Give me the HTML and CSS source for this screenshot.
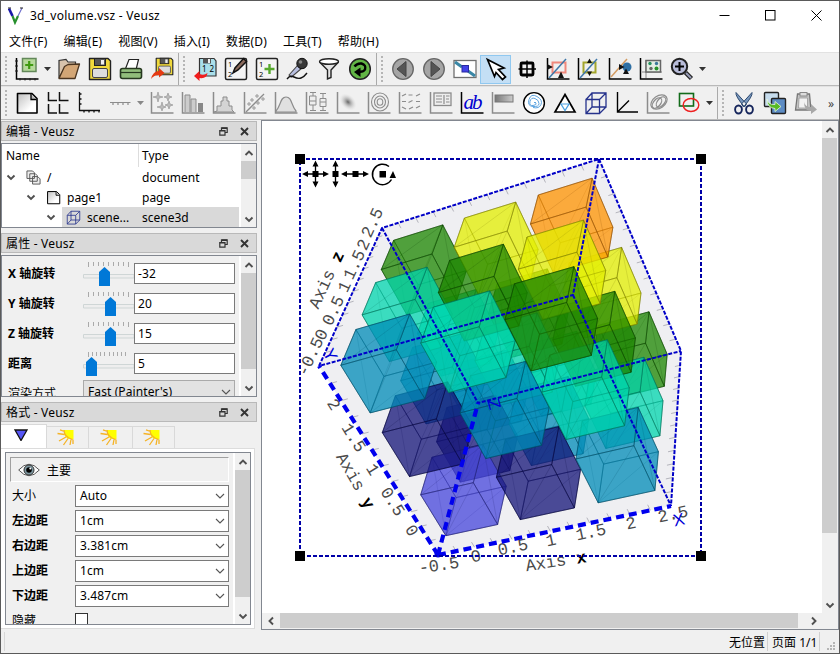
FILE: index.html
```html
<!DOCTYPE html>
<html lang="zh">
<head>
    <meta charset="UTF-8">
    <title>3d_volume.vsz - Veusz</title>
    <link rel="stylesheet" href="styles.css">
</head>
<body>
<svg class="defs" width="0" height="0">
    <symbol id="axes" viewBox="0 0 24 24"><path d="M1.5 1V22H23.500" fill="none" stroke="currentColor" stroke-width="1.500"/></symbol>
    <symbol id="float" viewBox="0 0 9 9"><path d="M2.500 3V.8H8.200V5.500H6.500M.8 3.500H6V8.200H.8z" fill="none" stroke="#333" stroke-width="1.2"/><path d="M.8 3.800H6M3 1.200h5" stroke="#333" stroke-width="1.400"/></symbol>
    <symbol id="close" viewBox="0 0 9 9"><path d="M1 1L8 8M8 1L1 8" stroke="#333" stroke-width="1.900"/></symbol>
    <symbol id="up" viewBox="0 0 10 10"><path d="M1.500 7L5 3.500 8.500 7" fill="none" stroke="#505050" stroke-width="1.900"/></symbol>
    <symbol id="down" viewBox="0 0 10 10"><path d="M1.500 3.500L5 7 8.500 3.500" fill="none" stroke="#505050" stroke-width="1.900"/></symbol>
    <symbol id="combo" viewBox="0 0 10 10"><path d="M1 3L5 7 9 3" fill="none" stroke="#555" stroke-width="1.100"/></symbol>
    <symbol id="cube" viewBox="0 0 24 24"><path d="M2 8.500H15.500V22.500H2zM8 2H22V16H8zM2 8.500L8 2M15.500 8.500L22 2M15.500 22.500L22 16M2 22.500L8 16" fill="none" stroke="#26328c" stroke-width="1.300"/></symbol>
    <symbol id="sheet" viewBox="0 0 24 24"><path d="M2.500 2.500H17L22 7.500V22H2.500z" fill="url(#paper)" stroke="#000" stroke-width="1.600" stroke-linejoin="round"/><path d="M16 3V8.500H21.500" fill="#bbb" stroke="#000" stroke-width="1.300"/></symbol>
    <symbol id="floppy" viewBox="0 0 24 24"><path d="M1.500 1.500H20L22.500 4V22.500H1.500z" fill="#f0d93c" stroke="#222" stroke-width="1.400" stroke-linejoin="round"/><rect x="6.500" y="1.500" width="11" height="7" fill="#555" stroke="#222"/><rect x="13" y="3" width="3" height="4.500" fill="#eee"/><rect x="4.500" y="11.500" width="15" height="9" rx="1.500" fill="#ddd" stroke="#444"/></symbol>
    <symbol id="sun" viewBox="0 0 17 17"><path d="M7 1H16.500V10H12A7 7 0 0 1 7 4z" fill="#ff0"/><path d="M7 1Q7 8 15.500 10.500M7.500 2.500L3 .8M7.500 5.500L.5 4.500M9 8L2 12M11 9.500L6.500 16M14 10.500L13 16M16 10.500V15" fill="none" stroke="#f5b326" stroke-width="1.300"/></symbol>
    <linearGradient id="paper" x1="0" y1="0" x2="1" y2="1"><stop offset=".1" stop-color="#c8c8c8"/><stop offset=".7" stop-color="#fff"/></linearGradient>
</svg>

<div class="window">
    <div class="titlebar">
        <svg class="logo" viewBox="0 0 16 18"><path d="M1 1.500L4.500 9" stroke="#1717a8" stroke-width="2.600"/><path d="M4.500 9L7 15.500 10 9" fill="none" stroke="#27902d" stroke-width="2.200"/><path d="M10 9L14 1" stroke="#6a6acb" stroke-width="1.100"/><path d="M0 1h3M12 1h3" stroke="#222" stroke-width="1"/></svg>
        <span class="title">3d_volume.vsz - Veusz</span>
        <svg class="win-btn" viewBox="0 0 11 11"><path d="M.5 5.500H10.500" stroke="#000"/></svg>
        <svg class="win-btn" viewBox="0 0 11 11"><rect x=".5" y=".5" width="9.500" height="9.500" fill="none" stroke="#000"/></svg>
        <svg class="win-btn" viewBox="0 0 11 11"><path d="M.5 .5L10.500 10.500M10.500 .5L.5 10.500" stroke="#000"/></svg>
    </div>
    <div class="menubar">
        <span>文件(F)</span><span>编辑(E)</span><span>视图(V)</span><span>插入(I)</span><span>数据(D)</span><span>工具(T)</span><span>帮助(H)</span>
    </div>

    <div class="toolbar">
        <div class="group">
            <i class="grip"></i>
            <b class="tool"><svg viewBox="0 0 24 24"><use href="#axes"/><path d="M0 4h3M0 9h3M0 14h3M5 21v2.500M10 21v2.500M15 21v2.500M20 21v2.500" stroke="#222"/><rect x="7.500" y="1.500" width="13.500" height="13" fill="#b5d99a" stroke="#63885a" stroke-width="1.500"/><path d="M14.200 4v8M10.200 8h8" stroke="#3f9a10" stroke-width="2.200"/></svg></b>
            <b class="drop"></b>
            <b class="tool"><svg viewBox="0 0 24 24"><path d="M2 21V3.500L9 2.500 11 5H18.500V9L8 10z" fill="#d8c3ac" stroke="#333" stroke-width="1.200"/><path d="M2 21.500L7.500 9.500 11 7.500 22.500 7 18 21.500z" fill="#d3a676" stroke="#4b3520" stroke-width="1.300" stroke-linejoin="round"/></svg></b>
            <b class="tool"><svg viewBox="0 0 24 24"><use href="#floppy"/></svg></b>
            <b class="tool"><svg viewBox="0 0 24 24"><path d="M6 13L10 2.500H19.500L17 13z" fill="#fff" stroke="#222" stroke-width="1.200"/><rect x="1.500" y="11.500" width="21" height="10" rx="2" fill="#91bd7b" stroke="#26381f" stroke-width="1.600"/><path d="M2 15.500H22" stroke="#26381f" stroke-width="1.200"/></svg></b>
            <b class="tool"><svg viewBox="0 0 24 24"><use href="#floppy" x="5" y="0" width="19" height="19"/><path d="M1 22Q3 14 9 14V11L14.500 16 9 20.500V18Q4 18 1 22z" fill="#e63a12"/></svg></b>
        </div>
        <div class="group group-b">
            <i class="grip"></i>
            <b class="tool"><svg viewBox="0 0 24 24"><path d="M6.500 1.500H21L23 4V19H6.500z" fill="#a9dfea" stroke="#333" stroke-width="1.200"/><rect x="10" y="1.500" width="8" height="5" fill="#555"/><rect x="15" y="2" width="2" height="4" fill="#eee"/><text x="9" y="15" font-size="8" textLength="12">12</text><path d="M1 19L6.500 14V17Q11 19 14.500 16Q14 22 6.500 21V24z" fill="#f01d1d"/></svg></b>
            <b class="tool"><svg viewBox="0 0 24 24"><rect x="1.500" y="1.500" width="21" height="21" rx="1.500" fill="#f4f4f4" stroke="#222" stroke-width="1.500"/><text x="4" y="10" font-size="7.500">1</text><text x="4" y="20" font-size="7.500">2</text><path d="M9 16L11 11 19.500 1.500 22.500 4.500 14 13z" fill="#8a6a5c" stroke="#111" stroke-width="1.500"/></svg></b>
            <b class="tool"><svg viewBox="0 0 24 24"><rect x="1.500" y="1.500" width="21" height="21" rx="1.500" fill="#f4f4f4" stroke="#222" stroke-width="1.500"/><text x="4" y="10" font-size="7.500">1</text><text x="4" y="20" font-size="7.500">2</text><path d="M14.500 7v10M9.500 12h10" stroke="#55a82c" stroke-width="2.400"/></svg></b>
            <b class="tool"><svg viewBox="0 0 24 24"><path d="M3 18L12 8 15.500 11.500 5.500 20z" fill="#b8bfe0" stroke="#444" stroke-width="1.100"/><circle cx="16" cy="6.500" r="5.200" fill="#393939" stroke="#111"/><circle cx="14.500" cy="5" r="1.800" fill="#888"/><path d="M1 22Q4 18 8 20T15 21T21 16" fill="none" stroke="#111" stroke-width="1.400"/></svg></b>
            <b class="tool"><svg viewBox="0 0 24 24"><path d="M2.500 5L10.500 13V22L14 20.500V13L21.500 5" fill="#e4e4e4" stroke="#222" stroke-width="1.400"/><ellipse cx="12" cy="4.500" rx="9.500" ry="2.800" fill="#fff" stroke="#222" stroke-width="1.400"/></svg></b>
            <b class="tool"><svg viewBox="0 0 24 24"><circle cx="12" cy="12" r="10.300" fill="#62b545" stroke="#222" stroke-width="1.500"/><path d="M6.500 9.500Q9 6 13.500 6.500Q18.500 8 17 12.500Q15.500 15 11.500 14.800" fill="none" stroke="#000" stroke-width="2.400"/><path d="M6 15L12.500 10.500V20z" fill="#000"/></svg></b>
        </div>
        <div class="group last">
            <i class="grip"></i>
            <b class="tool"><svg viewBox="0 0 24 24"><circle cx="12" cy="12" r="10.300" fill="#a5a5a5" stroke="#666" stroke-width="1.300"/><path d="M15 4.500V19.500L6 12z" fill="#555" stroke="#444"/></svg></b>
            <b class="tool"><svg viewBox="0 0 24 24"><circle cx="12" cy="12" r="10.300" fill="#a5a5a5" stroke="#666" stroke-width="1.300"/><path d="M9 4.500V19.500L18 12z" fill="#555" stroke="#444"/></svg></b>
            <b class="tool"><svg viewBox="0 0 24 24"><rect x="1" y="3.500" width="22" height="17" fill="#fff" stroke="#707070" stroke-width="1.300"/><path d="M2 5L9 10M15 14L22 19" stroke="#3a87a6" stroke-width="3"/><rect x="9" y="8.500" width="6.500" height="6.500" fill="#4343e8" stroke="#2929a0"/></svg></b>
            <b class="tool active"><svg viewBox="0 0 24 24"><path d="M3.500 2.500L20 11 14.500 12.500 21.500 20 18.500 22.500 12 15.500 10.500 19.500z" fill="#fff" stroke="#000" stroke-width="1.700"/></svg></b>
            <b class="tool"><svg viewBox="0 0 24 24"><rect x="6" y="6" width="12" height="12" rx="1" fill="none" stroke="#000" stroke-width="2.800"/><path d="M12 3.500V21M3.500 12H21" stroke="#000" stroke-width="1.500"/></svg></b>
            <b class="tool"><svg viewBox="0 0 24 24"><use href="#axes"/><rect x="6.500" y="5.500" width="13" height="10" fill="none" stroke="#f0887c" stroke-width="2"/><path d="M3 21L20 2" stroke="#3f76a8" stroke-width="1.500"/><path d="M1 7L7 10 1 13zM12 21L15 14.500 18 21z" fill="#111"/></svg></b>
            <b class="tool"><svg viewBox="0 0 24 24"><use href="#axes"/><rect x="6.500" y="5.500" width="12" height="10" fill="none" stroke="#a4a62c" stroke-width="2"/><path d="M3 21L20 2" stroke="#3f76a8" stroke-width="1.500"/><path d="M10 6L12.500 1.500 15 6zM10 14.500L12.500 19 15 14.500z" fill="#111"/></svg></b>
            <b class="tool"><svg viewBox="0 0 24 24"><use href="#axes"/><path d="M3 20L19 2" stroke="#d39b61" stroke-width="1.500"/><circle cx="19" cy="10" r="4.500" fill="#2e6fa4"/><path d="M11 7L16.500 10 11 13zM15 17L18 11.500 21 17z" fill="#111"/></svg></b>
            <b class="tool"><svg viewBox="0 0 24 24"><use href="#axes"/><path d="M7 3V21M3 15H23" stroke="#888"/><rect x="7" y="3.500" width="14.500" height="11.500" fill="#e4eee4" stroke="#666" stroke-width="1.500"/><circle cx="11" cy="6.500" r="1.700" fill="#26915f"/><circle cx="17.500" cy="6.500" r="1.700" fill="#3b789a"/><circle cx="12" cy="11.500" r="1.700" fill="#666"/><circle cx="17.500" cy="11.500" r="2" fill="#27912a"/></svg></b>
            <b class="tool"><svg viewBox="0 0 24 24"><path d="M15.500 15.500L21.500 21.500" stroke="#222" stroke-width="4.500"/><path d="M16 16L21 21" stroke="#999db8" stroke-width="2"/><circle cx="9.500" cy="9.500" r="7.700" fill="#b8bcd9" stroke="#222" stroke-width="2"/><path d="M9.500 5V14M5 9.500H14" stroke="#000" stroke-width="2"/></svg></b>
            <b class="drop"></b>
        </div>
    </div>

    <div class="toolbar">
        <div class="group long">
            <i class="grip"></i>
            <b class="tool"><svg viewBox="0 0 24 24"><use href="#sheet"/></svg></b>
            <b class="tool"><svg viewBox="0 0 24 24"><path d="M2.500 1V9.500H11M13.500 1V9.500H22.500M2.500 13V22H11M13.500 13V22H22.500" fill="none" stroke="#111" stroke-width="1.500"/></svg></b>
            <b class="tool"><svg viewBox="0 0 24 24"><path d="M2.500 1V19.500H23M2 3h2.500M2 8h2.500M2 13h2.500M7 20v1.500M12 20v1.500M17 20v1.500M22 20v1.500" fill="none" stroke="#111" stroke-width="1.300"/></svg></b>
            <b class="tool off"><svg viewBox="0 0 24 24"><path d="M2 11.500H22.500M5 12v2M10 12v2M15 12v2M20 12v2" stroke="currentColor" stroke-width="1.200"/></svg></b>
            <b class="drop grey"></b>
            <b class="tool off"><svg viewBox="0 0 24 24"><use href="#axes"/><path d="M8 1L9 5 13 6 9 7 8 11 7 7 3 6 7 5zM18 2L19 5 22 6 19 7 18 10 17 7 14 6 17 5zM12 11L13 15 16 16 13 17 12 20 11 17 7 16 11 15zM19 10L20 13 23 14 20 15 19 18 18 15 15 14 18 13z" fill="#bbb" stroke="#999" stroke-width=".7"/></svg></b>
            <b class="tool off"><svg viewBox="0 0 24 24"><use href="#axes"/><path d="M4 21V4H9V21M10 21V8H15V21" fill="#ccc" stroke="currentColor"/><rect x="17" y="12" width="5" height="9" fill="#888"/></svg></b>
            <b class="tool off"><svg viewBox="0 0 24 24"><use href="#axes"/><path d="M2 21L5 20V15H9V10H11V6H15V10H17V15H20V19L22 21z" fill="#d4d4d4" stroke="currentColor"/></svg></b>
            <b class="tool off"><svg viewBox="0 0 24 24"><use href="#axes"/><path d="M3 21L21 3" stroke="currentColor" stroke-width="1.300"/><g fill="#ddd" stroke="#999"><circle cx="6" cy="13" r="1.200"/><circle cx="9" cy="9" r="1.200"/><circle cx="14" cy="5" r="1.200"/><circle cx="20" cy="8" r="1.200"/><circle cx="15" cy="12" r="1.200"/><circle cx="11" cy="17" r="1.200"/></g></svg></b>
            <b class="tool off"><svg viewBox="0 0 24 24"><use href="#axes"/><path d="M2 20C7 15 6 6 12 6S17 14 22 20V21H2z" fill="#e0e0e0" stroke="currentColor" stroke-width="1.200"/></svg></b>
            <b class="tool off"><svg viewBox="0 0 24 24"><use href="#axes"/><path d="M8 1V20M5 1.500H11M5 19.500H11M18 2V20M15 2.500H21M15 19.500H21" stroke="currentColor"/><path d="M4.500 5H11V14H4.500zM4.500 10H11M15 7.500H21V15.500H15zM15 11H21" fill="#eee" stroke="currentColor"/></svg></b>
            <b class="tool off"><svg viewBox="0 0 24 24"><radialGradient id="blur"><stop offset="0" stop-color="#666"/><stop offset="1" stop-color="#ddd" stop-opacity="0"/></radialGradient><use href="#axes"/><ellipse cx="12" cy="11" rx="10" ry="7" transform="rotate(45 12 11)" fill="url(#blur)"/></svg></b>
            <b class="tool off"><svg viewBox="0 0 24 24"><use href="#axes"/><g fill="none" stroke="currentColor" stroke-width="1.100"><ellipse cx="13" cy="11" rx="8.500" ry="9"/><ellipse cx="13" cy="11" rx="5.500" ry="6"/><ellipse cx="13" cy="11" rx="2.800" ry="3.300"/></g></svg></b>
            <b class="tool off"><svg viewBox="0 0 24 24"><use href="#axes"/><path d="M4 5L8 3M10.500 4H14.500M18 5L22 3M4 10.500H8M10.500 11.500L14.500 9.500M18 10.500H22M4 16L8 18M11 18L15 16M18 17L22 15" stroke="currentColor" stroke-width="1.200"/></svg></b>
            <b class="tool off"><svg viewBox="0 0 24 24"><use href="#axes"/><rect x="5" y="2" width="17" height="12.500" fill="#eee" stroke="currentColor" stroke-width="1.300"/><path d="M7 5H13M7 8H13M7 11H13M15 4V13M17 5H20.500M17 8H20M17 11H20.500" stroke="currentColor" stroke-width="1.200"/></svg></b>
            <b class="tool"><svg class="word" viewBox="0 0 24 24"><use href="#axes"/><text class="ab" x="3.500" y="18" textLength="19">ab</text></svg></b>
            <b class="tool off"><svg viewBox="0 0 24 24"><linearGradient id="bar"><stop offset="0" stop-color="#777"/><stop offset="1" stop-color="#ccc"/></linearGradient><use href="#axes"/><rect x="4" y="4" width="18" height="7" fill="url(#bar)" stroke="#777"/></svg></b>
            <b class="tool"><svg viewBox="0 0 24 24"><circle cx="12" cy="12" r="10.400" fill="#fff" stroke="#000" stroke-width="1.400"/><path d="M12 12q1-2 2 0t-3 2.500-3-4 5-3 4 5-6 3-4-7 8-3 4 8-8 3" fill="none" stroke="#5fa5e0" stroke-width="1"/></svg></b>
            <b class="tool"><svg viewBox="0 0 24 24"><path d="M12 3.500L22 21H2z" fill="#fff" stroke="#000" stroke-width="1.700"/><path d="M8 13H16L12 19.500z" fill="none" stroke="#4ba0e0" stroke-width="1.200"/></svg></b>
            <b class="tool"><svg viewBox="0 0 24 24"><use href="#cube"/></svg></b>
            <b class="tool"><svg viewBox="0 0 24 24"><path d="M2.500 1V21H23M2.500 21L14 9.500" fill="none" stroke="#000" stroke-width="1.400"/></svg></b>
            <b class="tool off"><svg viewBox="0 0 24 24"><use href="#axes"/><g fill="none" stroke="currentColor" stroke-width="1.200"><ellipse cx="13" cy="11" rx="9" ry="6" transform="rotate(-35 13 11)"/><ellipse cx="11" cy="12" rx="6" ry="3.500" transform="rotate(-50 11 12)"/><ellipse cx="15" cy="11" rx="6" ry="3.500" transform="rotate(-50 15 11)"/></g></svg></b>
            <b class="tool"><svg viewBox="0 0 24 24"><rect x="2.500" y="2.500" width="14" height="12.500" fill="none" stroke="#126b1a" stroke-width="1.600"/><ellipse cx="14" cy="14" rx="7.800" ry="6.500" fill="none" stroke="#ee2020" stroke-width="1.400"/></svg></b>
            <b class="drop"></b>
        </div>
        <div class="group last">
            <i class="grip"></i>
            <b class="tool"><svg viewBox="0 0 24 24"><path d="M4 1.500Q3 5 12.500 16L14.500 13zM20 1.500Q21 5 11.500 16L9.500 13z" fill="#7897bd" stroke="#2e4a70" stroke-width="1"/><ellipse cx="6.500" cy="18.500" rx="3.400" ry="4" fill="none" stroke="#16265c" stroke-width="1.900"/><ellipse cx="17.500" cy="18.500" rx="3.400" ry="4" fill="none" stroke="#16265c" stroke-width="1.900"/></svg></b>
            <b class="tool"><svg viewBox="0 0 24 24"><rect x="1.500" y="1.500" width="14" height="14" rx="1" fill="#c6dced" stroke="#222" stroke-width="1.400"/><rect x="8.500" y="7.500" width="14" height="15" rx="1" fill="#5d8cc4" stroke="#222" stroke-width="1.400"/><path d="M4 8Q5 14 12 13.500V10.500L18 15.500 12 20.500V17.500Q4 17 4 8z" fill="#57ba25" stroke="#e8f6df" stroke-width=".8"/></svg></b>
            <b class="tool"><svg viewBox="0 0 24 24"><path d="M3.500 3H15.500L17 19H1.500z" fill="#c4c4c4" stroke="#777" stroke-width="1.300"/><rect x="6" y="1.500" width="7" height="3.500" fill="#ddd" stroke="#888"/><path d="M5 7H13.500V17H4.500z" fill="#f2f2f2" stroke="#999" stroke-width=".8"/><path d="M10 11Q11 16 17 16V13L23 18.500 17 23V20Q10 20 10 11z" fill="#a8a8a8"/></svg></b>
            <span class="more">»</span>
        </div>
    </div>

    <div class="main">
        <div class="docks">
            <div class="dock-title"><span>编辑 - Veusz</span><svg class="ctl"><use href="#float"/></svg><svg class="ctl"><use href="#close"/></svg></div>
            <div class="panel tree">
                <div class="tree-body">
                    <div class="tree-row head"><span class="name">Name</span><span class="type">Type</span></div>
                    <div class="tree-row"><span class="name"><svg class="exp"><use href="#down"/></svg><svg class="node" viewBox="0 0 16 16"><path d="M1 1H7L9 3V9H1zM4 4H10L12 6V12H4zM7 7H12.500L15 9.500V15H7z" fill="#eee" stroke="#555"/></svg>/</span><span class="type">document</span></div>
                    <div class="tree-row l1"><span class="name"><svg class="exp"><use href="#down"/></svg><svg class="node"><use href="#sheet"/></svg>page1</span><span class="type">page</span></div>
                    <div class="tree-row l2"><span class="name"><svg class="exp"><use href="#down"/></svg><em class="picked"><svg class="node"><use href="#cube"/></svg>scene...</em></span><span class="type picked">scene3d</span></div>
                </div>
                <div class="vscroll"><svg><use href="#up"/></svg><i class="thumb t1"></i><svg><use href="#down"/></svg></div>
            </div>

            <div class="dock-title"><span>属性 - Veusz</span><svg class="ctl"><use href="#float"/></svg><svg class="ctl"><use href="#close"/></svg></div>
            <div class="panel props">
                <div class="prop-body">
                    <div class="prop"><label>X 轴旋转</label><svg class="slider" viewBox="0 0 51 30"><path class="track" d="M.5 12.500H51V16H.5z"/><path class="ticks" d="M5.500 0v5M10.500 0v4M15.500 0v4M20.500 0v4M25.500 0v4M30.500 0v4M35.500 0v4M40.500 0v4M45.500 0v5"/><path class="knob" d="M16 24V10L21.500 5 27 10V24z"/></svg><div class="field">-32</div></div>
                    <div class="prop"><label>Y 轴旋转</label><svg class="slider" viewBox="0 0 51 30"><path class="track" d="M.5 12.500H51V16H.5z"/><path class="ticks" d="M5.500 0v5M10.500 0v4M15.500 0v4M20.500 0v4M25.500 0v4M30.500 0v4M35.500 0v4M40.500 0v4M45.500 0v5"/><path class="knob" d="M22 24V10L27.500 5 33 10V24z"/></svg><div class="field">20</div></div>
                    <div class="prop"><label>Z 轴旋转</label><svg class="slider" viewBox="0 0 51 30"><path class="track" d="M.5 12.500H51V16H.5z"/><path class="ticks" d="M5.500 0v5M10.500 0v4M15.500 0v4M20.500 0v4M25.500 0v4M30.500 0v4M35.500 0v4M40.500 0v4M45.500 0v5"/><path class="knob" d="M22 24V10L27.500 5 33 10V24z"/></svg><div class="field">15</div></div>
                    <div class="prop"><label>距离</label><svg class="slider" viewBox="0 0 51 30"><path class="track" d="M.5 12.500H51V16H.5z"/><path class="ticks" d="M5.500 0v5M9.500 0v4M13.500 0v4M17.500 0v4M21.500 0v4M26.500 0v4M30.500 0v4M34.500 0v4M38.500 0v4M42.500 0v4"/><path class="knob" d="M3 24V10L8.500 5 14 10V24z"/></svg><div class="field">5</div></div>
                    <div class="prop plain"><label>渲染方式</label><div class="field select">Fast (Painter's)<svg><use href="#combo"/></svg></div></div>
                </div>
                <div class="vscroll"><svg><use href="#up"/></svg><i class="thumb t2"></i><svg><use href="#down"/></svg></div>
            </div>

            <div class="dock-title"><span>格式 - Veusz</span><svg class="ctl"><use href="#float"/></svg><svg class="ctl"><use href="#close"/></svg></div>
            <div class="tabs">
                <div class="tab on"><svg class="tri" viewBox="0 0 14 12"><path d="M1 1H13L7 11.500z" fill="#5656f5" stroke="#111" stroke-width="1.300"/></svg></div>
                <div class="tab"><svg><use href="#sun"/></svg></div>
                <div class="tab wide"><svg><use href="#sun"/></svg></div>
                <div class="tab"><svg><use href="#sun"/></svg></div>
            </div>
            <div class="pane">
                <div class="panel format">
                    <div class="format-body">
                        <div class="section"><svg viewBox="0 0 22 14"><path d="M.7 7Q11-4.500 21.300 7Q11 18.500.7 7z" fill="#fff" stroke="#555"/><circle cx="11" cy="7" r="5" fill="#7d97a0" stroke="#333"/><circle cx="11" cy="7" r="2.800"/><circle cx="12.300" cy="5.500" r="1" fill="#fff"/></svg>主要</div>
                        <div class="opt plain"><label>大小</label><div class="field">Auto<svg><use href="#combo"/></svg></div></div>
                        <div class="opt"><label>左边距</label><div class="field">1cm<svg><use href="#combo"/></svg></div></div>
                        <div class="opt"><label>右边距</label><div class="field">3.381cm<svg><use href="#combo"/></svg></div></div>
                        <div class="opt"><label>上边距</label><div class="field">1cm<svg><use href="#combo"/></svg></div></div>
                        <div class="opt"><label>下边距</label><div class="field">3.487cm<svg><use href="#combo"/></svg></div></div>
                        <div class="opt plain"><label>隐藏</label><i class="check"></i></div>
                    </div>
                    <div class="vscroll"><svg><use href="#up"/></svg><i class="thumb t3"></i><svg><use href="#down"/></svg></div>
                </div>
            </div>
        </div>

        <div class="canvas">
            <div class="canvas-row">
                <svg class="plot" viewBox="262 121 560 492">
                    <g id="volume"></g>
                    <g class="labels">
                        <g class="ax-x">
                            <text transform="translate(439 566) rotate(-8)">-0.5</text><text transform="translate(476 557) rotate(-12)">0</text>
                            <text transform="translate(513 548) rotate(-12)">0.5</text><text transform="translate(551 541) rotate(-12)">1</text>
                            <text transform="translate(591 533) rotate(-12)">1.5</text><text transform="translate(631 524) rotate(-12)">2</text>
                            <text transform="translate(673 515) rotate(-12)">2.5</text>
                            <text transform="translate(556 562) rotate(-9)">Axis <tspan class="bold">x</tspan></text>
                        </g>
                        <g class="ax-y">
                            <text transform="translate(411 531) rotate(58)">0</text><text transform="translate(392 502) rotate(58)">0.5</text>
                            <text transform="translate(372 470) rotate(58)">1</text><text transform="translate(353 438) rotate(58)">1.5</text>
                            <text transform="translate(333 405) rotate(58)">2</text>
                            <text transform="translate(355 481) rotate(60)">Axis <tspan class="bold">y</tspan></text>
                        </g>
                        <g class="ax-z">
                            <text transform="translate(311 357) rotate(-65)">-0.5</text><text transform="translate(322 335) rotate(-65)">0</text>
                            <text transform="translate(334 311) rotate(-65)">0.5</text><text transform="translate(345 287) rotate(-65)">1</text>
                            <text transform="translate(355 265) rotate(-65)">1.5</text><text transform="translate(364 245) rotate(-65)">2</text>
                            <text transform="translate(373 223) rotate(-65)">2.5</text>
                            <text transform="translate(327 280) rotate(-65)">Axis <tspan class="bold">z</tspan></text>
                        </g>
                    </g>
                    <path class="edge" d="M319 366L382 228L599 159L681 351L671 506M382 228L478 403L681 351M599 159L573 295L319 366M573 295L671 506"/>
                    <path class="edge thick" d="M438 555L671 506M438 555L319 366M438 555L478 403"/>
                    <circle cx="438" cy="554" r="3.500" fill="#00e"/>
                    <g class="corner">
                        <text transform="translate(679 520) rotate(-12)">X</text>
                        <text transform="translate(330 355) rotate(62)">Y</text>
                        <text transform="translate(494 404) rotate(75)">Z</text>
                    </g>
                    <rect class="selection" x="300" y="159" width="401" height="397"/>
                    <path d="M295 154h10v10h-10zM696 154h10v10h-10zM295 551h10v10h-10zM696 551h10v10h-10z"/>
                    <g class="move">
                        <path d="M305 174H326M315.500 163V185M335.500 163V185M344 174H367" stroke="#000" stroke-width="1.300"/>
                        <path d="M312.500 171h6v6h-6zM332.500 171h6v6h-6zM352.500 171h6v6h-6zM379.500 171h6.500v6.500h-6.500z"/>
                        <path d="M302 174l6-3v6zM329 174l-6-3v6zM315.500 160.500l-3 6h6zM315.500 187.500l-3-6h6zM335.500 160.500l-3 6h6zM335.500 187.500l-3-6h6zM341 174l6-3v6zM369 174l-6-3v6zM393 171l-3.500 7h6.500z"/>
                        <path d="M391.500 179.500A10.200 10.200 0 1 1 389 166.500" fill="none" stroke="#000" stroke-width="1.500"/>
                    </g>
                </svg>
                <div class="vscroll"><svg><use href="#up"/></svg><i class="thumb t4"></i><svg><use href="#down"/></svg></div>
            </div>
            <div class="hscroll"><svg class="left"><use href="#up"/></svg><i></i><svg class="right"><use href="#up"/></svg></div>
        </div>
    </div>

    <div class="status"><span class="first"></span><span class="cell">无位置</span><span class="cell">页面 1/1</span><svg viewBox="0 0 9 9"><path d="M6 0h2v2H6zM3 3h2v2H3zM6 3h2v2H6zM0 6h2v2H0zM3 6h2v2H3zM6 6h2v2H6z" fill="#b5b5b5"/></svg></div>
</div>
<script src="plot.js"></script>
</body>
</html>
```
FILE: styles.css
```css
* {
    box-sizing: border-box;
}
body {
    margin: 0;
    font-family: "Noto Sans", "Noto Sans CJK SC", sans-serif;
    font-size: 12px;
    color: #000;
}
svg {
    display: block;
    flex: none;
}
.defs {
    position: absolute;
}
.window {
    display: flex;
    flex-direction: column;
    width: 840px;
    height: 654px;
    border: 1px solid #5a5a5a;
    background: #f0f0f0;
    overflow: hidden;
}
.titlebar {
    display: flex;
    align-items: center;
    height: 29px;
    background: #fff;
    padding-right: 17px;
}
.logo {
    width: 16px;
    height: 18px;
    margin-left: 7px;
}
.title {
    flex: 1;
    margin-left: 6px;
    letter-spacing: .25px;
}
.win-btn {
    width: 11px;
    height: 11px;
    margin-left: 35px;
}
.win-btn:nth-of-type(2) {
    margin-left: 0;
}
.menubar {
    display: flex;
    height: 22px;
    line-height: 24px;
    background: #fff;
    padding-left: 8px;
}
.menubar span {
    margin-right: 16px;
    letter-spacing: .2px;
}

/* toolbars */
.toolbar {
    display: flex;
    height: 34px;
    border-top: 1px solid #e2e2e2;
    border-bottom: 1px solid #b9b9b9;
}
.group {
    display: flex;
    align-items: center;
    width: 178px;
    border-right: 1px solid #aaa;
}
.group-b {
    width: 198px;
}
.group.long {
    width: 717px;
}
.group.last {
    flex: 1;
    border: 0;
}
.grip {
    width: 2px;
    height: 26px;
    margin: 0 4px;
    background: repeating-linear-gradient(#b5b5b5 0 2px, #f0f0f0 2px 4px);
}
.tool {
    display: flex;
    flex: none;
    align-items: center;
    justify-content: center;
    width: 31px;
    height: 29px;
    font-weight: normal;
}
.tool svg {
    width: 24px;
    height: 24px;
}
.tool .word {
    overflow: visible;
}
.tool.off {
    color: #8c8c8c;
}
.tool.active {
    background: #c4dff5;
    border: 1px solid #90c8f0;
}
.ab {
    font: italic 21px "Liberation Serif", serif;
    fill: #0000d0;
}
.drop {
    width: 7px;
    height: 4px;
    margin: 0 2px;
    background: #333;
    clip-path: polygon(0 0, 100% 0, 50% 100%);
}
.drop.grey {
    background: #888;
}
.more {
    margin-left: 7px;
    color: #444;
}

.main {
    display: flex;
    height: 510px;
}
.docks {
    width: 256px;
    margin-right: 4px;
    padding-top: 1px;
}
.dock-title {
    display: flex;
    align-items: center;
    height: 20px;
    padding: 0 7px 0 4px;
    margin-bottom: 2px;
    background: #d9d9d9;
    border: 1px solid #b9b9b9;
}
.dock-title span {
    flex: 1;
    letter-spacing: .2px;
}
.ctl {
    width: 9px;
    height: 9px;
    margin-left: 12px;
}
.panel {
    display: flex;
    border: 1px solid #828790;
    overflow: hidden;
}
.vscroll {
    display: flex;
    flex-direction: column;
    align-items: center;
    width: 17px;
    flex: none;
    border-left: 2px solid #fff;
    background: #f0f0f0;
}
.vscroll svg {
    width: 10px;
    height: 10px;
    margin: 4px 0 3px;
}
.thumb {
    width: 15px;
    background: #cdcdcd;
    margin-bottom: auto;
}
.t1 { height: 18px; }
.t2 { height: 96px; }
.t3 { height: 127px; }
.t4 { height: 395px; }

.tree {
    height: 85px;
    margin-bottom: 5px;
    background: #fff;
}
.tree-body {
    flex: 1;
}
.tree-row {
    display: flex;
    height: 20px;
    line-height: 21px;
}
.tree-row.head {
    height: 23px;
    line-height: 24px;
}
.head .name {
    padding-left: 4px;
    border-right: 1px solid #ddd;
}
.name {
    display: flex;
    width: 137px;
}
.type {
    flex: 1;
    padding-left: 3px;
}
.exp {
    width: 10px;
    height: 10px;
    margin: 5px 10px 0 4px;
}
.node {
    width: 15px;
    height: 15px;
    margin: 3px 6px 0 0;
}
.l1 .exp {
    margin-left: 24px;
}
.l2 .exp {
    margin-left: 44px;
    margin-right: 6px;
}
.picked {
    background: #d9d9d9;
}
em {
    display: flex;
    flex: 1;
    padding-left: 4px;
    font-style: normal;
}

.props {
    height: 142px;
    margin-bottom: 5px;
}
.prop-body {
    flex: 1;
    padding: 6px 0 0 6px;
}
.prop {
    display: flex;
    height: 30px;
}
.prop label {
    width: 75px;
    line-height: 24px;
    font-weight: bold;
}
.prop.plain label,
.opt.plain label {
    font-weight: normal;
}
.slider {
    width: 51px;
    height: 30px;
}
.track {
    fill: #eee;
    stroke: #cfd6d6;
}
.ticks {
    stroke: #aaa;
}
.knob {
    fill: #0078d7;
}
.field {
    display: flex;
    width: 101px;
    height: 21px;
    margin-top: 1px;
    padding-left: 3px;
    line-height: 18px;
    border: 1px solid #7a7a7a;
    background: #fff;
    align-items: center;
    white-space: nowrap;
    letter-spacing: .1px;
}
.field svg {
    width: 10px;
    height: 10px;
    margin-left: auto;
    margin-right: 3px;
}
.field.select {
    width: 152px;
    height: 23px;
    margin-top: -2px;
    padding-left: 4px;
    background: #e2e2e2;
    border-color: #aaa;
}

/* format tabs */
.tabs {
    display: flex;
    align-items: flex-end;
    height: 24px;
}
.tab {
    display: flex;
    justify-content: center;
    width: 42px;
    height: 22px;
    padding: 2px 4px 0 0;
    border: 1px solid #d9d9d9;
    border-left: 0;
    border-bottom: 0;
}
.tab.on {
    width: 46px;
    height: 24px;
    padding-top: 4px;
    padding-right: 6px;
    background: #fff;
}
.tab.wide {
    width: 44px;
}
.tab svg {
    width: 17px;
    height: 17px;
}
.tab .tri {
    width: 14px;
    height: 12px;
}
.pane {
    width: 254px;
    height: 181px;
    padding: 3px 3px 4px 4px;
    background: #fff;
    border: 1px solid #dcdcdc;
    border-left: 0;
}
.format {
    height: 173px;
    background: #f0f0f0;
}
.format-body {
    flex: 1;
    padding: 4px 4px 0;
}
.section {
    display: flex;
    align-items: center;
    height: 25px;
    margin-bottom: 3px;
    padding-left: 7px;
    border: 1px solid #a0a0a0;
    border-right-color: #fff;
    border-bottom-color: #fff;
}
.section svg {
    width: 22px;
    height: 14px;
    margin-right: 7px;
}
.opt {
    display: flex;
    height: 25px;
    padding-left: 2px;
}
.opt label {
    width: 63px;
    font-weight: bold;
    line-height: 22px;
}
.opt .field {
    width: 154px;
    height: 22px;
    margin: 0;
    padding-left: 4px;
}
.check {
    width: 13px;
    height: 13px;
    margin-top: 3px;
    border: 1px solid #333;
    background: #fff;
}

/* plot */
.canvas {
    flex: 1;
    border: 1px solid #828790;
}
.canvas-row {
    display: flex;
    height: 492px;
}
.plot {
    width: 560px;
    height: 492px;
    background: #fff;
}
.canvas .vscroll {
    width: 15px;
    border: 0;
}
.hscroll {
    display: flex;
    align-items: center;
    height: 15px;
    background: #f0f0f0;
}
.hscroll svg {
    width: 10px;
    height: 10px;
    margin: 0 4px;
}
.hscroll i {
    width: 518px;
    height: 15px;
    background: #cdcdcd;
}
.left {
    transform: rotate(-90deg);
}
.hscroll .right {
    margin-left: 11px;
    transform: rotate(90deg);
}
.labels text {
    font: 17px "Liberation Mono", monospace;
    fill: #4a4a4a;
    text-anchor: middle;
    dominant-baseline: central;
    white-space: pre;
}
.labels .bold {
    font-weight: bold;
    fill: #000;
}
.edge {
    fill: none;
    stroke: #0000c8;
    stroke-width: 2;
    stroke-dasharray: 4 1.500;
}
.edge.thick {
    stroke: #0000ee;
    stroke-width: 4.200;
    stroke-dasharray: 8 5;
}
.corner text {
    font: 17px "Liberation Sans", sans-serif;
    fill: #0000d8;
    text-anchor: middle;
    dominant-baseline: central;
}
.selection {
    fill: none;
    stroke: #0000a8;
    stroke-width: 2;
    stroke-dasharray: 4 2;
}
.wall {
    fill: #efeff2;
}
.tick {
    stroke: #b4b4bc;
}
.face {
    fill-opacity: .5;
    stroke-opacity: .5;
    stroke-width: 1;
    stroke-linejoin: round;
}
.crease {
    stroke-opacity: .18;
}

.status {
    display: flex;
    height: 23px;
    padding: 2px 3px 2px 3px;
    line-height: 21px;
}
.first {
    width: 725px;
    border-left: 1px solid #d7d7d7;
}
.cell {
    padding-right: 2px;
    margin-right: 4px;
    border-right: 1px solid #d0d0d0;
    white-space: nowrap;
}
.status svg {
    width: 9px;
    height: 9px;
    margin: 10px 0 0 auto;
}
```
FILE: plot.js
```js
// origin corner and the weighted steps along x, y and z
const origin = [438, 555, 1];
const steps = [
    [187.6, -83.3, -0.0677],
    [-153.7, -228.8, -0.1088],
    [110.8, -89.8, 0.147]
];
// one colour per data value: fill, outline
const colors = [
    ['#4545db', '#202070'], ['#131378', '#05053c'], ['#008cb8', '#004a62'],
    ['#00d5ad', '#007058'], ['#1b8500', '#0c4400'], ['#e3f000', '#7a7c00'],
    ['#ff9300', '#8a4a00']
];
const volume = document.getElementById('volume');

function project(p) {
    const q = origin.map((o, n) => o + p[0] * steps[0][n] + p[1] * steps[1][n] + p[2] * steps[2][n]);
    return { x: q[0] / q[2], y: q[1] / q[2], depth: q[2] };
}

function draw(tag, attrs) {
    const el = document.createElementNS('http://www.w3.org/2000/svg', tag);
    for (const key in attrs) el.setAttribute(key, attrs[key]);
    volume.appendChild(el);
}

function line(a, b, cls, stroke) {
    const attrs = { x1: a.x, y1: a.y, x2: b.x, y2: b.y, class: cls };
    if (stroke) attrs.stroke = stroke;
    draw('line', attrs);
}

function drawCube(cube) {
    const size = 0.35;
    const faces = [];
    for (let axis = 0; axis < 3; axis++) {
        for (const side of [-size, size]) {
            const corners = [[-size, -size], [size, -size], [size, size], [-size, size]].map(c => {
                const offset = [c[0], c[1]];
                offset.splice(axis, 0, side);
                return project(cube.pos.map((v, n) => (v + 0.5 + offset[n]) / 3));
            });
            faces.push({ corners: corners, depth: corners.reduce((s, c) => s + c.depth, 0) });
        }
    }
    faces.sort((a, b) => b.depth - a.depth);
    const [fill, stroke] = colors[cube.value];
    faces.forEach(face => {
        const c = face.corners;
        draw('polygon', { points: c.map(p => p.x.toFixed(1) + ',' + p.y.toFixed(1)).join(' '), class: 'face', fill: fill, stroke: stroke });
        line(c[0], c[2], 'crease', stroke);
    });
}

draw('polygon', { points: '438,555 671,506 681,351 599,159 382,228 319,366', class: 'wall' });

// small ticks along the outer edges
for (let i = 1; i < 12; i++) {
    const t = i / 12;
    line(project([t, 1, 1]), project([t, 0.97, 1]), 'tick');
    line(project([1, t, 1]), project([0.97, t, 1]), 'tick');
    line(project([1, 0, t]), project([0.97, 0, t]), 'tick');
    line(project([0, 1, t]), project([0.03, 1, t]), 'tick');
    line(project([0, t, 0]), project([0.03, t, 0]), 'tick');
    line(project([t, 0, 0]), project([t, 0.03, 0]), 'tick');
}

const cubes = [];
for (let x = 0; x < 3; x++) {
    for (let y = 0; y < 3; y++) {
        for (let z = 0; z < 3; z++) {
            const depth = project([(x + 0.5) / 3, (y + 0.5) / 3, (z + 0.5) / 3]).depth;
            cubes.push({ pos: [x, y, z], value: x + y + z, depth: depth });
        }
    }
}
cubes.sort((a, b) => b.depth - a.depth).forEach(drawCube);
```
